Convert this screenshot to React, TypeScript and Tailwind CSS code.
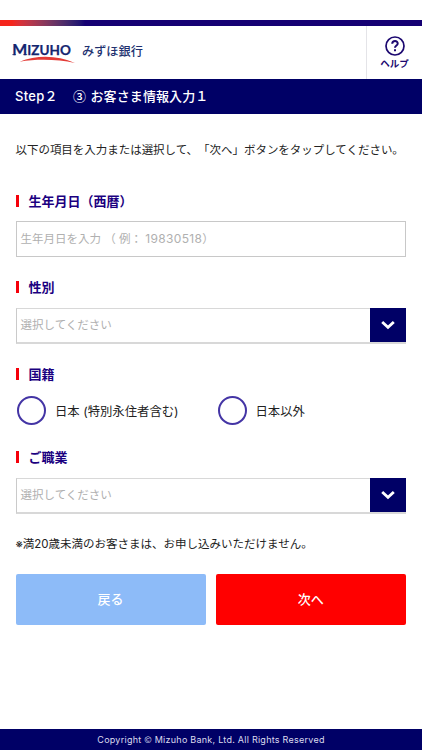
import type { ReactNode } from 'react';

const SectionTitle = ({ children }: { children: ReactNode }) => (
  <h2 className="flex h-5 items-center text-[13px] leading-5 font-bold whitespace-nowrap text-[#1b0080]">
    <span className="mr-[10px] h-3 w-[3px] bg-[#f5000a]" />
    {children}
  </h2>
);

const SelectBox = () => (
  <div className="flex h-9 border border-r-0 border-b-2 border-[#d8d8d8] border-l-[#cacaca]">
    <div className="flex flex-1 items-center pt-px pl-1 text-[11.5px] text-[#b0b0b0]">選択してください</div>
    <div className="-mt-px flex w-9 items-center justify-center bg-[#000066]">
      <svg width="14" height="10" viewBox="0 0 14 10" fill="none" stroke="white" strokeWidth="2.8">
        <path d="M1.2 2 7 7.3 12.8 2" />
      </svg>
    </div>
  </div>
);

const Radio = ({ label }: { label: string }) => (
  <div className="flex items-center gap-[9px] text-[12.35px] whitespace-nowrap">
    <span className="size-[29px] shrink-0 rounded-full border-2 border-[#4435a5]" />
    <span className="pt-[3px]">{label}</span>
  </div>
);

export default function App() {
  return (
    <div className="flex h-[750px] w-[422px] flex-col overflow-hidden bg-white pt-5 font-['Inter','Noto_Sans_CJK_JP',sans-serif] text-[#222] [text-spacing-trim:space-all]">
      <div className="h-[6px] shrink-0 bg-linear-to-r from-[#f5251c] from-[12px] to-[#150073] to-[85px]" />
      <header className="flex h-[53px] shrink-0">
        <div className="flex flex-1 items-center pl-3">
          <svg width="64" height="32" viewBox="0 -4 64 32" className="mt-[2px] shrink-0 overflow-visible">
            <g fill="#14256f" stroke="#14256f" strokeWidth="0.25" fontWeight="700" fontFamily="Lato, sans-serif">
              <text x="0.3" y="13" fontSize="15.5" textLength="15" lengthAdjust="spacingAndGlyphs">M</text>
              <text x="15.3" y="13" fontSize="13.5" textLength="43.5" lengthAdjust="spacingAndGlyphs">IZUHO</text>
            </g>
            <path d="M0.4 12.6h3.4M11.4 12.6h3.8" stroke="#14256f" strokeWidth="0.8" />
            <path d="M7.5 19.8C25 12.8 45 13.2 63 21 46 17.4 26 16.6 7.5 19.8Z" fill="#e33b36" />
          </svg>
          <span className="ml-[6px] text-[12.2px] font-medium text-[#20306f]">みずほ銀行</span>
        </div>
        <div className="flex w-[56px] flex-col items-center border-l border-[#e4e4e8] pt-[10px] text-[#1c0870]">
          <svg width="20" height="20" viewBox="0 0 20 20" fill="none" stroke="currentColor">
            <circle cx="10" cy="10" r="9" strokeWidth="1.7" />
            <path d="M7.2 7.7C7.4 4.2 12.9 4.3 12.7 7.7 12.6 9.6 10 9.6 10 11.8M10 13.2v2" strokeWidth="2" />
          </svg>
          <span className="mt-[1px] text-[9.5px] leading-[14px] font-bold">ヘルプ</span>
        </div>
      </header>
      <div className="flex h-[35px] shrink-0 items-center bg-[#000066] pl-[15px] text-[13px] font-medium whitespace-nowrap text-white">
        <span className="w-[58px] tracking-[0.3px]">Step２</span>
        <span className="mr-[4.5px] pb-[2px] font-['Noto_Sans_CJK_JP',sans-serif]">③</span>
        <span className="tracking-[0.1px]">お客さま情報入力１</span>
      </div>
      <main className="flex flex-1 flex-col pr-4 pl-[15.5px]">
        <p className="mt-[26px] h-5 text-[11.48px] leading-5 whitespace-nowrap">以下の項目を入力または選択して、「次へ」ボタンをタップしてください。</p>
        <div className="mt-[31px]"><SectionTitle>生年月日（西暦）</SectionTitle></div>
        <div className="mt-[10px] flex h-9 items-center border-[1.5px] border-[#c8c8c8] pt-px pl-1 text-[11.5px] whitespace-pre text-[#b0b0b0]">
          <p>生年月日を入力 （ 例： <span className="text-[12px] tracking-[0.35px]">19830518</span>）</p>
        </div>
        <div className="mt-[20px]"><SectionTitle>性別</SectionTitle></div>
        <div className="mt-[11px]"><SelectBox /></div>
        <div className="mt-[20px]"><SectionTitle>国籍</SectionTitle></div>
        <div className="mt-[12px] flex pl-[1.5px]">
          <div className="w-[200.5px]"><Radio label="日本 (特別永住者含む)" /></div>
          <Radio label="日本以外" />
        </div>
        <div className="mt-[22px]"><SectionTitle>ご職業</SectionTitle></div>
        <div className="mt-[11px]"><SelectBox /></div>
        <p className="mt-[20px] h-5 text-[11.5px] leading-5 whitespace-nowrap">※満20歳未満のお客さまは、お申し込みいただけません。</p>
        <div className="mt-[20px] flex gap-[10px] text-[13px] font-medium text-white">
          <button className="h-[51px] flex-1 rounded-[2px] bg-[#8dbbf8]">戻る</button>
          <button className="h-[51px] flex-1 rounded-[2px] bg-[#ff0000]">次へ</button>
        </div>
      </main>
      <footer className="flex h-[21px] shrink-0 items-center justify-center bg-[#000066] text-[9px] leading-[21px] tracking-[0.25px] text-[#dcdcee]">
        <p>Copyright <span className="font-['Noto_Sans_CJK_JP',sans-serif]">©</span> Mizuho Bank, Ltd. All Rights Reserved</p>
      </footer>
    </div>
  );
}
